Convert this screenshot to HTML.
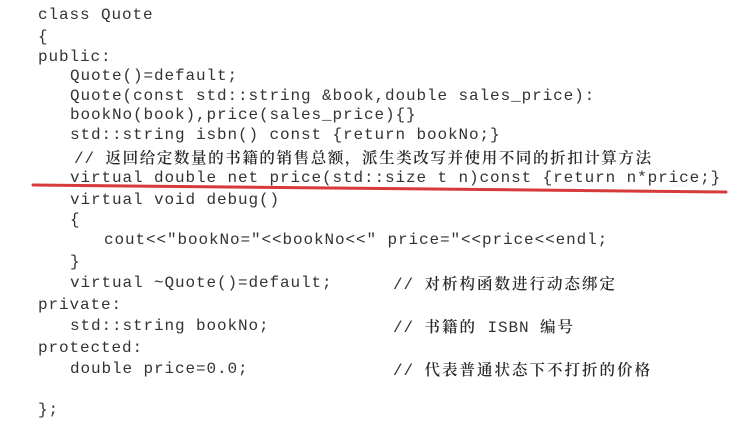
<!DOCTYPE html>
<html><head><meta charset="utf-8"><style>
html,body{margin:0;padding:0;background:#fff;width:739px;height:443px;overflow:hidden}
.l{position:absolute;font-family:"Liberation Mono","Noto Sans CJK SC",monospace;font-size:16px;letter-spacing:0.9px;color:#333;white-space:pre;line-height:20px}
.c{font-family:"Noto Serif CJK SC","Noto Sans CJK SC",serif;letter-spacing:2px;font-size:15.5px;font-weight:600;color:#2a2a2a}
</style></head><body>
<div class="l" style="left:38px;top:5px">class Quote</div>
<div class="l" style="left:38px;top:27px">{</div>
<div class="l" style="left:38px;top:47px">public:</div>
<div class="l" style="left:70px;top:66px">Quote()=default;</div>
<div class="l" style="left:70px;top:86px">Quote(const std::string &amp;book,double sales_price):</div>
<div class="l" style="left:70px;top:105px">bookNo(book),price(sales_price){}</div>
<div class="l" style="left:70px;top:125px">std::string isbn() const {return bookNo;}</div>
<div class="l" style="left:74px;top:147px">// <span class="c" style="letter-spacing:1.6px">返回给定数量的书籍的销售总额，派生类改写并使用不同的折扣计算方法</span></div>
<div class="l" style="left:70px;top:168px">virtual double net price(std::size t n)const {return n*price;}</div>
<svg style="position:absolute;left:0;top:0" width="739" height="443"><line x1="33" y1="185" x2="726" y2="192" stroke="#d63a3a" stroke-width="3" stroke-linecap="round"/></svg>
<div class="l" style="left:70px;top:190px">virtual void debug()</div>
<div class="l" style="left:70px;top:210px">{</div>
<div class="l" style="left:104px;top:230px">cout&lt;&lt;"bookNo="&lt;&lt;bookNo&lt;&lt;" price="&lt;&lt;price&lt;&lt;endl;</div>
<div class="l" style="left:70px;top:252px">}</div>
<div class="l" style="left:70px;top:273px">virtual ~Quote()=default;</div>
<div class="l" style="left:393px;top:273px">// <span class="c">对析构函数进行动态绑定</span></div>
<div class="l" style="left:38px;top:295px">private:</div>
<div class="l" style="left:70px;top:316px">std::string bookNo;</div>
<div class="l" style="left:393px;top:316px">// <span class="c">书籍的</span> ISBN <span class="c">编号</span></div>
<div class="l" style="left:38px;top:338px">protected:</div>
<div class="l" style="left:70px;top:359px">double price=0.0;</div>
<div class="l" style="left:393px;top:359px">// <span class="c">代表普通状态下不打折的价格</span></div>
<div class="l" style="left:38px;top:400px">};</div>
</body></html>
